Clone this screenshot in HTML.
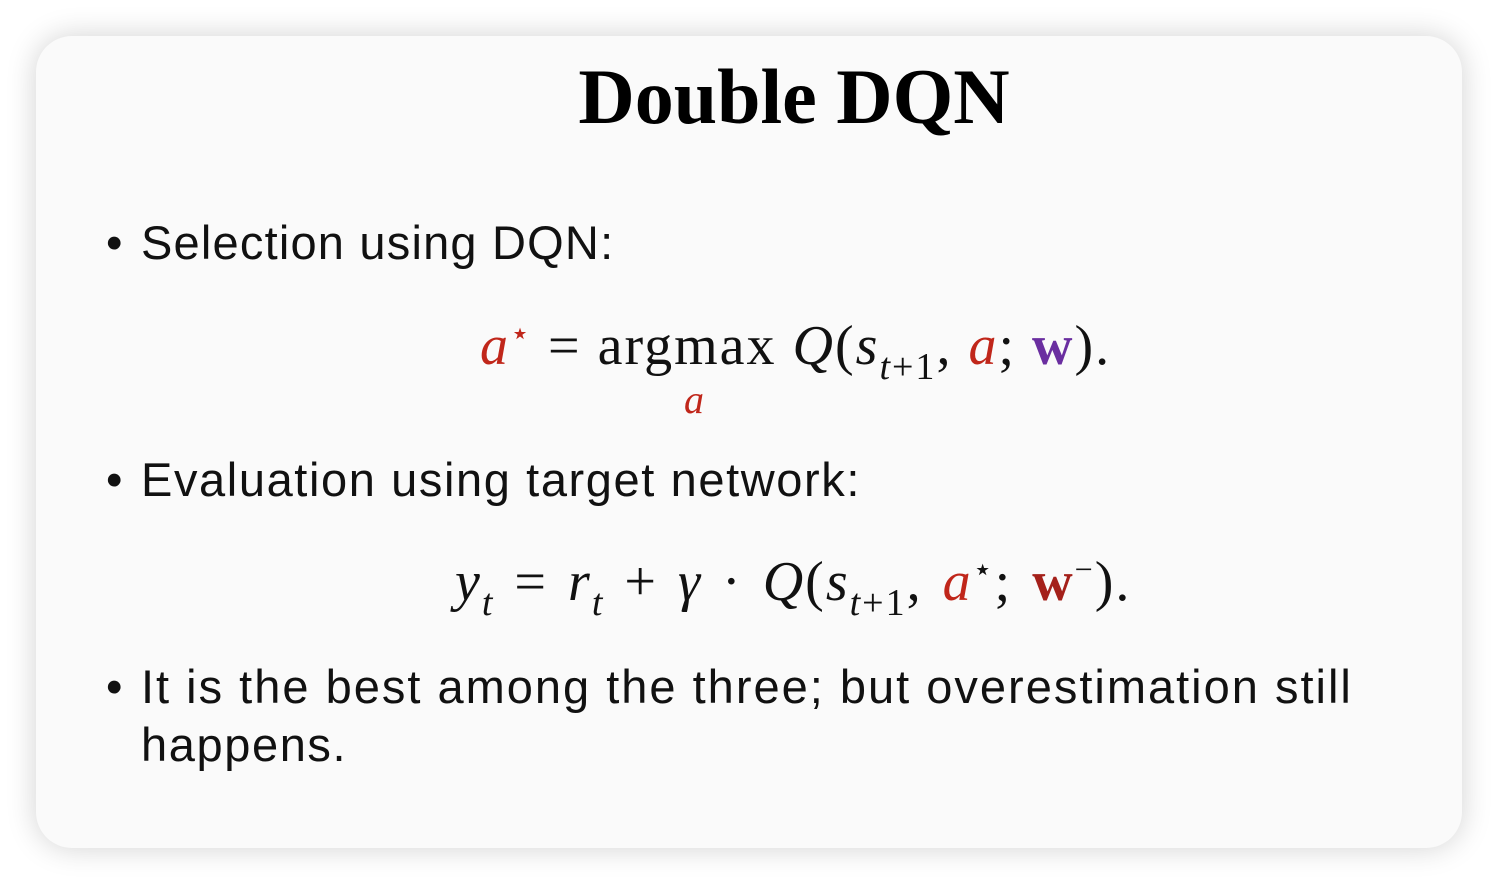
<!DOCTYPE html>
<html><head><style>
body{margin:0;width:1498px;height:884px;background:#fff;overflow:hidden;position:relative;font-family:"Liberation Sans",sans-serif}
.card{position:absolute;left:36px;top:36px;width:1426px;height:812px;background:#fafafa;border-radius:36px;box-shadow:0 0 30px rgba(0,0,0,0.18)}
.t{position:absolute;white-space:nowrap}
.title{left:0;width:1588px;text-align:center;top:52px;font-family:"Liberation Serif",serif;font-weight:bold;font-size:78px;color:#000}
.b{font-size:47px;color:#111;left:106px;letter-spacing:1.6px}
.b span.d{display:inline-block;width:35px;letter-spacing:0}
.m{font-family:"Liberation Serif",serif;font-size:56px;color:#111;letter-spacing:2px}
.r{color:#c0261a}.p{color:#6a2ea0}.dr{color:#a4201a}
i{font-style:italic}
sub{font-size:38px;vertical-align:-15px}
sup{font-size:32px;vertical-align:20px}
</style></head><body>
<div class="card"></div>
<div class="t title">Double DQN</div>
<div class="t b" style="top:215px;letter-spacing:1.2px"><span class="d">•</span>Selection using DQN:</div>
<div class="t m" style="left:480px;top:314px"><i class="r">a</i><sup class="r">⋆</sup> = argmax <i>Q</i>(<i>s</i><sub><i>t</i>+1</sub>, <i class="r">a</i>; <b class="p">w</b>).</div>
<div class="t m" style="left:684px;top:376px;font-size:40px"><i class="r">a</i></div>
<div class="t b" style="top:452px"><span class="d">•</span>Evaluation using target network:</div>
<div class="t m" style="left:455px;top:550px;word-spacing:4px"><i>y</i><sub><i>t</i></sub> = <i>r</i><sub><i>t</i></sub> + <i>γ</i> · <i>Q</i>(<i>s</i><sub><i>t</i>+1</sub>, <i class="r">a</i><sup>⋆</sup>; <b class="dr">w</b><sup>−</sup>).</div>
<div class="t b" style="top:659px;letter-spacing:2px"><span class="d">•</span>It is the best among the three; but overestimation still</div>
<div class="t b" style="top:717px;left:141px">happens.</div>
</body></html>
